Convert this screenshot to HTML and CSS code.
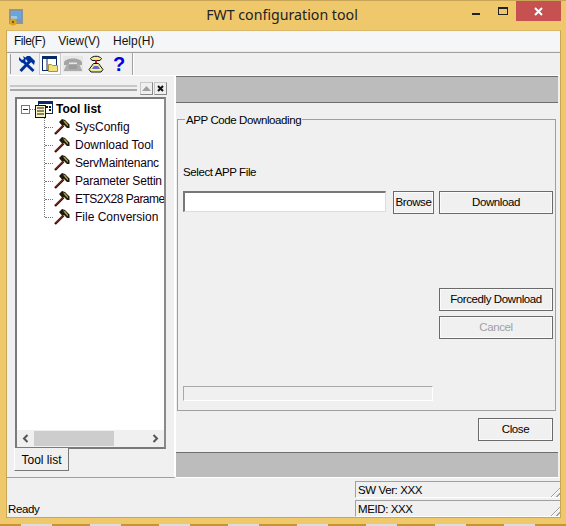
FILE: index.html
```html
<!DOCTYPE html>
<html lang="en">
<head>
<meta charset="utf-8">
<title>FWT configuration tool</title>
<link rel="stylesheet" href="styles.css">
</head>
<body>
<svg class="defs" width="0" height="0" aria-hidden="true">
  <symbol id="hammer" viewBox="0 0 16 16">
    <path d="M1 15 9.500 6.500" stroke="#3a0f08" stroke-width="2.400" fill="none"/>
    <path d="M1.500 14 9 6.500" stroke="#a8452a" stroke-width="0.800" fill="none"/>
    <path d="M5 3 8 0l3 1 4.500 4.500V9H13L10 6 8 6.500z" fill="#1f1a08"/>
    <path d="M9 1.500 11 2l3 3.500V7.500L11 4.500z" fill="#a89a50"/>
  </symbol>
</svg>
<div class="window">
  <header class="titlebar">
    <svg class="appicon" width="16" height="18" viewBox="0 0 16 18">
      <rect x="1" y="1" width="14" height="15" fill="#8a93a0"/>
      <rect x="3" y="3" width="10" height="8" fill="#6aa6de"/>
      <rect x="3" y="8" width="6" height="3" fill="#9cc8ea"/>
      <circle cx="5" cy="14" r="3.500" fill="#d9a520"/>
      <circle cx="5" cy="14" r="1.200" fill="#7a5a10"/>
    </svg>
    <h1 class="title">FWT configuration tool</h1>
    <div class="winbtns">
      <span class="minbtn"></span>
      <span class="maxbtn"></span>
      <span class="closebtn">
        <svg width="9" height="9" viewBox="0 0 9 9"><path d="M1 1 8 8M8 1 1 8" stroke="#fff" stroke-width="2"/></svg>
      </span>
    </div>
  </header>
  <div class="client">
    <nav class="menubar">
      <span class="menu menu-file">File(F)</span>
      <span class="menu">View(V)</span>
      <span class="menu">Help(H)</span>
    </nav>
    <div class="toolbar">
      <span class="grip"></span>
      <span class="tool">
        <svg width="18" height="18" viewBox="0 0 18 18">
          <path d="M2.500 16 13 5" stroke="#00309c" stroke-width="3" fill="none"/>
          <path d="M7 3 9 1l3 0 5 5-1 4-3-3-2 1z" fill="#00309c"/>
          <path d="M15.500 16 5 6" stroke="#00309c" stroke-width="3" fill="none"/>
          <path d="M1 2 4 5l2-1-1-3 3 2-1 4-3 1-3-3z" fill="#00309c"/>
        </svg>
      </span>
      <span class="tool tool-on">
        <svg width="18" height="18" viewBox="0 0 18 18">
          <rect x="1.500" y="1.500" width="14" height="14" fill="#fff" stroke="#0a2a66"/>
          <rect x="1" y="1" width="15" height="3" fill="#0a2a66"/>
          <path d="M6 4v12" stroke="#0a2a66"/>
          <path d="M7.500 16.500V9.500h3l1 1h5v6z" fill="#f2e27a" stroke="#a09440"/>
        </svg>
      </span>
      <span class="tool">
        <svg width="20" height="18" viewBox="0 0 20 18">
          <rect x="0" y="1" width="20" height="16" fill="#e6e6e6"/>
          <path d="M1 8c0-6 18-6 18 0v2h-5V7.500H6V10H1z" fill="#a4a4a4"/>
          <path d="M4 9h12l3 6v1H1v-1z" fill="#ababab"/>
          <path d="M6 11h8M6 13h8" stroke="#8c8c8c"/>
        </svg>
      </span>
      <span class="tool">
        <svg width="18" height="18" viewBox="0 0 18 18">
          <path d="M3.500 3.500C6 .5 12 .5 14.500 3.500L13 5.500H5z" fill="#f4ec8c" stroke="#111"/>
          <path d="M9 5v4" stroke="#c02020" stroke-width="2"/>
          <path d="M6.500 8.500h5l4.500 6-2 2.500H4l-2-2.500z" fill="#f4ec8c" stroke="#111"/>
          <path d="M7 11h4l2 3H5z" fill="#5a6ac8"/>
        </svg>
      </span>
      <span class="tool help">?</span>
      <span class="sep"></span>
    </div>
    <main class="main">
      <aside class="leftpane">
        <div class="panehead">
          <span class="gripper"></span>
          <span class="panebtn">
            <svg width="9" height="5" viewBox="0 0 9 5"><path d="M4.500 0 9 5H0z" fill="#a0a0a0"/></svg>
          </span>
          <span class="panebtn">
            <svg width="7" height="7" viewBox="0 0 7 7"><path d="M1 1 6 6M6 1 1 6" stroke="#111" stroke-width="2"/></svg>
          </span>
        </div>
        <div class="treebox">
          <div class="tree">
            <div class="root">
              <span class="expander"></span>
              <span class="dots-h short"></span>
              <svg class="rooticon" width="18" height="17" viewBox="0 0 18 17">
                <rect x="3.500" y="0.500" width="14" height="12" fill="#fff" stroke="#0a2a66"/>
                <rect x="3" y="0" width="15" height="3" fill="#0a2a66"/>
                <path d="M11 5h2v2h-2zM14 5h2v2h-2zM14 8h2v2h-2z" fill="#111"/>
                <rect x="0.500" y="4.500" width="10" height="12" fill="#f8f4c0" stroke="#111"/>
                <path d="M2 7h7M2 10h7M2 13h7" stroke="#111"/>
              </svg>
              <strong class="rootlabel">Tool list</strong>
            </div>
            <ul class="items">
              <li class="item"><span class="dots-h"></span><svg class="ham" width="16" height="16"><use href="#hammer"/></svg><span class="label">SysConfig</span></li>
              <li class="item"><span class="dots-h"></span><svg class="ham" width="16" height="16"><use href="#hammer"/></svg><span class="label">Download Tool</span></li>
              <li class="item"><span class="dots-h"></span><svg class="ham" width="16" height="16"><use href="#hammer"/></svg><span class="label label-tight">ServMaintenanc</span></li>
              <li class="item"><span class="dots-h"></span><svg class="ham" width="16" height="16"><use href="#hammer"/></svg><span class="label label-tight">Parameter Settin</span></li>
              <li class="item"><span class="dots-h"></span><svg class="ham" width="16" height="16"><use href="#hammer"/></svg><span class="label label-tighter">ETS2X28 Parame</span></li>
              <li class="item"><span class="dots-h"></span><svg class="ham" width="16" height="16"><use href="#hammer"/></svg><span class="label">File Conversion</span></li>
            </ul>
          </div>
          <div class="hscroll">
            <svg class="arrow" width="7" height="9" viewBox="0 0 7 9"><path d="M5.500 1 2 4.500 5.500 8" stroke="#555" stroke-width="2" fill="none"/></svg>
            <span class="track"><span class="thumb"></span></span>
            <svg class="arrow" width="7" height="9" viewBox="0 0 7 9"><path d="M1.500 1 5 4.500 1.500 8" stroke="#555" stroke-width="2" fill="none"/></svg>
          </div>
        </div>
        <div class="tab">Tool list</div>
      </aside>
      <section class="rightpane">
        <div class="band band-top"></div>
        <div class="dialog">
          <fieldset class="group">
            <legend class="legend">APP Code Downloading</legend>
            <div class="selectlabel">Select APP File</div>
            <div class="filerow">
              <input class="fileinput" type="text" aria-label="Select APP File">
              <button class="btn browse" type="button">Browse</button>
              <button class="btn wide" type="button">Download</button>
            </div>
            <div class="actions">
              <button class="btn wide" type="button">Forcedly Download</button>
              <button class="btn wide" type="button" disabled>Cancel</button>
            </div>
            <div class="progress"></div>
          </fieldset>
          <div class="closerow"><button class="btn close" type="button">Close</button></div>
        </div>
        <div class="band band-bottom"></div>
      </section>
    </main>
    <footer class="statusbar">
      <div class="ready">Ready</div>
      <div class="panels">
        <div class="panel">SW Ver: XXX<span class="sizegrip"></span></div>
        <div class="panel">MEID: XXX<span class="sizegrip"></span></div>
      </div>
    </footer>
  </div>
</div>
<div class="desktop-strip"></div>
</body>
</html>
```

FILE: styles.css
```css
* { box-sizing: border-box; }
html, body { margin: 0; padding: 0; }
body {
  width: 566px;
  height: 526px;
  overflow: hidden;
  background: #f0c86c;
  font-family: "Liberation Sans", Arial, sans-serif;
  font-size: 12px;
  color: #000;
}
.defs { position: absolute; }
.window {
  height: 518px;
  display: flex;
  flex-direction: column;
  border-top: 1px solid #c9a557;
}
.desktop-strip {
  height: 2px;
  margin-top: 6px;
  background: repeating-linear-gradient(90deg, #c8952c 0 21px, #dcdcdc 21px 52px, #c8952c 52px 69px);
}
.titlebar {
  height: 29px;
  display: flex;
  align-items: flex-start;
  padding-left: 8px;
  flex: none;
}
.appicon { margin-top: 7px; flex: none; }
.title {
  flex: 1;
  margin: 4px 0 0;
  padding-left: 68px;
  text-align: center;
  font-family: "Noto Sans", sans-serif;
  font-weight: 400;
  font-size: 14.2px;
  line-height: 20px;
  color: #222;
}
.winbtns { display: flex; align-items: flex-start; flex: none; padding-right: 5px; }
.minbtn { width: 8px; height: 2px; background: #222; margin: 12px 18px 0 0; }
.maxbtn { width: 10px; height: 8px; border: 1px solid #222; border-top-width: 2px; margin: 6px 8px 0 0; }
.closebtn {
  width: 45px;
  height: 20px;
  background: #c75050;
  display: flex;
  align-items: center;
  justify-content: center;
}
.client {
  flex: 1;
  margin: 0 5px 0 6px;
  border: 1px solid #c9a557;
  border-top-color: #d8b868;
  background: #f0f0f0;
  display: flex;
  flex-direction: column;
  min-height: 0;
}
.menubar {
  height: 21px;
  flex: none;
  background: #f5f6f8;
  display: flex;
  align-items: center;
  padding-left: 7px;
  gap: 13px;
  border-bottom: 1px solid #ebebeb;
}
.menu { color: #111; }
.menu-file { letter-spacing: -0.5px; }
.toolbar {
  height: 24px;
  flex: none;
  border-top: 1px solid #a0a0a0;
  border-bottom: 1px solid #fff;
  display: flex;
  align-items: center;
  padding-left: 1px;
  gap: 1px;
}
.grip { width: 3px; height: 20px; border-left: 1px solid #fff; border-right: 1px solid #a0a0a0; margin-right: 4px; }
.tool { width: 22px; height: 22px; display: flex; align-items: center; justify-content: center; }
.tool-on { background: #fbfbfb; border: 1px solid #c8c8c8; }
.help { color: #0000e0; font-weight: 700; font-size: 20px; line-height: 22px; }
.sep { width: 2px; height: 22px; border-left: 1px solid #a0a0a0; border-right: 1px solid #fff; margin-left: 1px; }
.main { flex: 1; display: flex; min-height: 0; }
.leftpane {
  width: 169px;
  flex: none;
  padding: 3px 8px 0 8px;
  display: flex;
  flex-direction: column;
  border-right: 2px solid #fff;
  border-bottom: 1px solid #a0a0a0;
}
.panehead { height: 16px; display: flex; align-items: center; gap: 1px; margin: 1px -1px 0 -5px; flex: none; }
.gripper { flex: 1; height: 6px; border-top: 2px solid #c8c8c8; border-bottom: 2px solid #a8a8a8; margin-right: 2px; }
.panebtn { width: 13px; height: 13px; border: 1px solid #c8c8c8; border-right-color: #888; border-bottom-color: #888; display: flex; align-items: center; justify-content: center; }
.treebox {
  height: 352px;
  margin-top: 1px;
  border: 2px solid #7a7a7a;
  border-right-color: #8a8a8a;
  background: #fff;
  display: flex;
  flex-direction: column;
  overflow: hidden;
  flex: none;
}
.tree { flex: 1; padding: 1px 0 0 4px; min-height: 0; overflow: hidden; }
.root { display: flex; align-items: center; height: 18px; }
.expander {
  width: 9px; height: 9px; border: 1px solid #777; flex: none;
  background: linear-gradient(#222, #222) center / 5px 1px no-repeat;
}
.dots-h { display: inline-block; width: 8px; border-top: 1px dotted #777; flex: none; }
.dots-h.short { width: 5px; }
.rooticon { flex: none; }
.rootlabel { margin-left: 3px; font-size: 12px; }
.items { list-style: none; margin: 0 0 0 23px; padding: 0; border-left: 1px dotted #777; height: 99px; }
.item { display: flex; align-items: center; height: 18px; white-space: nowrap; }
.ham { flex: none; margin: 0 5px 0 1px; }
.label { color: #100010; }
.label-tight { letter-spacing: -0.2px; }
.label-tighter { letter-spacing: -0.5px; }
.hscroll { height: 17px; flex: none; background: #f0f0f0; display: flex; align-items: center; padding: 0 5px; }
.track { flex: 1; height: 15px; padding: 0 0 0 5px; display: flex; }
.thumb { width: 80px; height: 15px; background: #cdcdcd; }
.tab {
  width: 55px;
  height: 23px;
  margin: -1px 0 0 -1px;
  padding-top: 2px;
  flex: none;
  background: #f0f0f0;
  border-right: 1px solid #777;
  border-bottom: 1px solid #777;
  border-left: 1px solid #fff;
  position: relative;
  text-align: center;
  line-height: 21px;
}
.rightpane {
  flex: 1;
  min-width: 0;
  display: flex;
  flex-direction: column;
  padding-right: 2px;
  border-bottom: 1px solid #fff;
}
.band { background: #bcbcbc; flex: none; border-top: 1px solid #6e6e6e; }
.band-top { height: 27px; border-bottom: 1px solid #6e6e6e; }
.band-bottom { height: 25px; }
.dialog {
  flex: 1;
  display: flex;
  flex-direction: column;
  padding: 0 2px 0 1px;
  min-height: 0;
  font-size: 11.5px;
  letter-spacing: -0.4px;
}
.group {
  margin: 8px 0 0;
  padding: 0 2px 0 5px;
  border: 1px solid #a0a0a0;
  height: 300px;
  flex: none;
  min-width: 0;
}
.legend { padding: 2px 1px 0; margin-left: 2px; line-height: 14px; }
.selectlabel { margin-top: 38px; line-height: 14px; }
.filerow { display: flex; margin-top: 12px; align-items: flex-start; }
.fileinput {
  width: 203px;
  height: 21px;
  padding: 0;
  margin: 0 7px 0 0;
  border: 2px solid #777;
  border-right: 1px solid #ddd;
  border-bottom: 1px solid #ddd;
  background: #fff;
}
.btn {
  height: 23px;
  padding: 0 0 2px;
  border: 1px solid #6a6a6a;
  background: #f0f0f0;
  box-shadow: inset 0 0 0 1px #fbfbfb;
  font: inherit;
  letter-spacing: inherit;
  color: #000;
  flex: none;
}
.btn:disabled { color: #a0a0a0; }
.browse { width: 41px; margin-right: 5px; }
.wide { width: 114px; }
.actions { display: flex; flex-direction: column; align-items: flex-end; gap: 5px; margin-top: 74px; }
.progress { width: 250px; height: 15px; margin-top: 47px; border: 1px solid #a8a8a8; border-right-color: #fff; border-bottom-color: #fff; }
.closerow { display: flex; justify-content: flex-end; padding: 7px 3px 0 0; }
.close { width: 75px; }
.statusbar { height: 39px; flex: none; display: flex; font-size: 11.5px; letter-spacing: -0.4px; }
.ready { flex: 1; padding-left: 1px; align-self: flex-end; line-height: 18px; margin-bottom: -1px; }
.panels { width: 205px; flex: none; display: flex; flex-direction: column; gap: 2px; padding-top: 3px; }
.panel {
  height: 17px;
  border-top: 1px solid #a0a0a0;
  border-left: 1px solid #a0a0a0;
  border-bottom: 1px solid #fff;
  line-height: 16px;
  padding-left: 2px;
  position: relative;
}
.sizegrip {
  position: absolute;
  right: 0;
  bottom: 0;
  width: 12px;
  height: 12px;
  background: repeating-linear-gradient(135deg, #f0f0f0 0 2px, #a0a0a0 2px 3px, #fff 3px 4px);
  clip-path: polygon(100% 0, 100% 100%, 0 100%);
}
```
